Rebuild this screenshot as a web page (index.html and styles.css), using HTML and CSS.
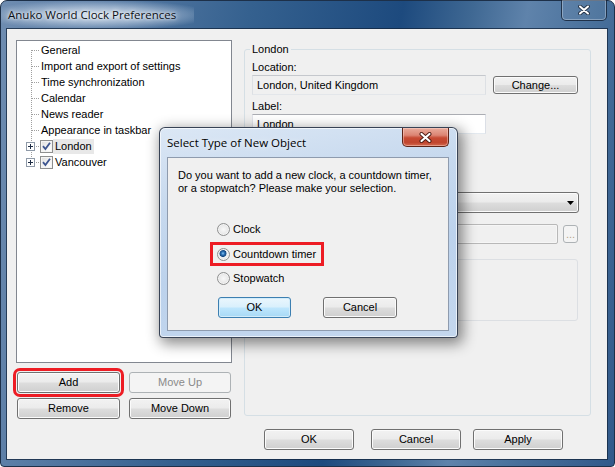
FILE: index.html
```html
<!DOCTYPE html>
<html>
<head>
<meta charset="utf-8">
<title>Anuko World Clock Preferences</title>
<link rel="stylesheet" href="styles.css">
</head>
<body>
<div class="window">
  <div class="titlebar">
    <div class="title">Anuko World Clock Preferences</div>
    <div class="caption-close">
      <svg width="12" height="10" viewBox="0 0 12 10"><path d="M2 1.5 L10 8.5 M10 1.5 L2 8.5" stroke="#27364a" stroke-width="3.8" stroke-linecap="round"/><path d="M2 1.5 L10 8.5 M10 1.5 L2 8.5" stroke="#ffffff" stroke-width="2" stroke-linecap="round"/></svg>
    </div>
  </div>
  <div class="client">
    <div class="main">
      <div class="left">
        <div class="tree">
          <div class="node first"><span class="gutter"></span><span class="label">General</span></div>
          <div class="node"><span class="gutter"></span><span class="label">Import and export of settings</span></div>
          <div class="node"><span class="gutter"></span><span class="label">Time synchronization</span></div>
          <div class="node"><span class="gutter"></span><span class="label">Calendar</span></div>
          <div class="node"><span class="gutter"></span><span class="label">News reader</span></div>
          <div class="node"><span class="gutter"></span><span class="label">Appearance in taskbar</span></div>
          <div class="node"><span class="gutter"><svg class="expander" width="9" height="9" viewBox="0 0 9 9"><rect x="0.5" y="0.5" width="8" height="8" fill="#ffffff" stroke="#8f9aa8"/><path d="M2 4.5h5M4.5 2v5" stroke="#1e2c44" stroke-width="1"/></svg></span><span class="check"><svg width="11" height="11" viewBox="0 0 11 11"><path d="M2 5.2 L4.4 8 L9 1.8" fill="none" stroke="#3d5590" stroke-width="1.8"/></svg></span><span class="label selected">London</span></div>
          <div class="node last"><span class="gutter"><svg class="expander" width="9" height="9" viewBox="0 0 9 9"><rect x="0.5" y="0.5" width="8" height="8" fill="#ffffff" stroke="#8f9aa8"/><path d="M2 4.5h5M4.5 2v5" stroke="#1e2c44" stroke-width="1"/></svg></span><span class="check"><svg width="11" height="11" viewBox="0 0 11 11"><path d="M2 5.2 L4.4 8 L9 1.8" fill="none" stroke="#3d5590" stroke-width="1.8"/></svg></span><span class="label">Vancouver</span></div>
        </div>
        <div class="btns">
          <button class="btn marked">Add</button>
          <button class="btn disabled">Move Up</button>
          <button class="btn">Remove</button>
          <button class="btn">Move Down</button>
        </div>
      </div>
      <fieldset class="group">
        <legend>London</legend>
        <div class="caption">Location:</div>
        <div class="row">
          <div class="field readonly w-main">London, United Kingdom</div>
          <button class="btn change">Change...</button>
        </div>
        <div class="caption gap">Label:</div>
        <div class="field w-main">London</div>
        <div class="combo"><svg width="7" height="4" viewBox="0 0 7 4"><path d="M0 0 H7 L3.5 4 Z" fill="#000"/></svg></div>
        <div class="row row-file">
          <div class="field disabled w-file"></div>
          <button class="btn disabled dots">...</button>
        </div>
        <div class="pane"></div>
      </fieldset>
    </div>
    <div class="footer">
      <button class="btn fbtn">OK</button>
      <button class="btn fbtn f-cancel">Cancel</button>
      <button class="btn fbtn f-apply">Apply</button>
    </div>

    <div class="dialog">
      <div class="dlg-titlebar">
        <div class="dlg-title">Select Type of New Object</div>
        <div class="dlg-close">
          <svg width="13" height="11" viewBox="0 0 13 11"><path d="M2.5 2 L10.5 9 M10.5 2 L2.5 9" stroke="#4b1a12" stroke-width="4" stroke-linecap="round"/><path d="M2.5 2 L10.5 9 M10.5 2 L2.5 9" stroke="#ffffff" stroke-width="2.2" stroke-linecap="round"/></svg>
        </div>
      </div>
      <div class="dlg-client">
        <p class="dlg-text">Do you want to add a new clock, a countdown timer,<br>or a stopwatch? Please make your selection.</p>
        <div class="options">
          <div class="opt"><span class="radio"></span><span>Clock</span></div>
          <div class="opt hl"><span class="radio checked"></span><span>Countdown timer</span></div>
          <div class="opt last"><span class="radio"></span><span>Stopwatch</span></div>
        </div>
        <div class="dlg-btns">
          <button class="btn default d-ok">OK</button>
          <button class="btn d-cancel">Cancel</button>
        </div>
      </div>
    </div>
  </div>
</div>
</body>
</html>
```

FILE: styles.css
```css
* { box-sizing: border-box; }
html, body { margin: 0; padding: 0; }
body {
  width: 615px;
  height: 467px;
  overflow: hidden;
  background: #ffffff;
  font-family: "Liberation Sans", Arial, sans-serif;
  font-size: 11px;
  color: #000;
}

/* ---------- main window frame ---------- */
.window {
  width: 615px;
  height: 467px;
  display: flex;
  flex-direction: column;
  padding: 0 7px 7px 6px;
  border: 1px solid #1d3049;
  border-radius: 7px 7px 4px 4px;
  background:
    linear-gradient(100deg, #6f8db1 0%, #5478a2 18%, #35618f 36%, #1d4a7e 58%, #3f6893 68%, #5f83ab 76%, #48709b 86%, #31598a 100%);
}
.titlebar {
  flex: none;
  height: 28px;
  display: flex;
  align-items: flex-start;
}
.title {
  margin-left: -6px;
  padding: 0 18px 0 7px;
  font-family: "Open Sans", "Noto Sans", sans-serif;
  font-size: 11.5px;
  line-height: 28px;
  color: #0b0f16;
  background: radial-gradient(ellipse 60% 55% at 50% 50%, rgba(235,242,250,0.85) 0%, rgba(200,215,232,0.55) 55%, rgba(160,182,210,0) 100%);
  text-shadow: 0 0 6px #ffffff, 0 0 3px rgba(255,255,255,0.8);
}
.caption-close {
  margin-left: auto;
  margin-top: -1px;
  width: 46px;
  height: 21px;
  border: 1px solid rgba(18,32,52,0.8);
  border-top: none;
  border-radius: 0 0 5px 5px;
  box-shadow: inset 0 0 0 1px rgba(255,255,255,0.3);
  background: rgba(255,255,255,0.06);
  display: flex;
  align-items: center;
  justify-content: center;
}

.client {
  flex: 1;
  position: relative;
  background: #f0f0f0;
  box-shadow: 0 0 0 1px rgba(18,36,60,0.75);
}

/* ---------- layout ---------- */
.main {
  height: 400px;
  display: flex;
}
.left {
  width: 225px;
  padding: 11px 0 0 9px;
}

/* ---------- tree ---------- */
.tree {
  width: 216px;
  height: 323px;
  border: 1px solid #828790;
  background: #ffffff;
  padding-top: 1px;
}
.node {
  height: 16px;
  display: flex;
  align-items: center;
}
.gutter {
  flex: none;
  width: 22px;
  align-self: stretch;
  display: flex;
  align-items: center;
  background:
    repeating-linear-gradient(to bottom, #a0a0a0 0 1px, transparent 1px 2px) 14px 0 / 1px 100% no-repeat,
    repeating-linear-gradient(to right, #a0a0a0 0 1px, transparent 1px 2px) 15px 8px / 7px 1px no-repeat;
}
.node.first .gutter {
  background:
    repeating-linear-gradient(to bottom, #a0a0a0 0 1px, transparent 1px 2px) 14px 8px / 1px 8px no-repeat,
    repeating-linear-gradient(to right, #a0a0a0 0 1px, transparent 1px 2px) 15px 8px / 7px 1px no-repeat;
}
.node.last .gutter {
  background:
    repeating-linear-gradient(to bottom, #a0a0a0 0 1px, transparent 1px 2px) 14px 0 / 1px 9px no-repeat,
    repeating-linear-gradient(to right, #a0a0a0 0 1px, transparent 1px 2px) 15px 8px / 7px 1px no-repeat;
}
.expander {
  display: block;
  margin-left: 9px;
}
.check {
  flex: none;
  width: 13px;
  height: 13px;
  margin-left: 1px;
  border: 1px solid #8e8f8f;
  background: linear-gradient(135deg, #dcdcdc 0%, #f6f6f6 60%, #ffffff 100%);
  box-shadow: inset 0 0 0 1px #f4f4f4;
  display: flex;
  align-items: center;
  justify-content: center;
}
.check svg { display: block; }
.label {
  padding: 0 2px;
  line-height: 15px;
  white-space: nowrap;
}
.label.selected {
  background: #e8e8e8;
}

/* ---------- buttons ---------- */
.btn {
  font: inherit;
  color: #000;
  height: 21px;
  padding: 0;
  margin: 0;
  border: 1px solid #707070;
  border-radius: 3px;
  background: linear-gradient(#f2f2f2 0%, #ebebeb 48%, #dddddd 52%, #cfcfcf 100%);
  box-shadow: inset 0 0 0 1px #fbfbfb;
  text-align: center;
  line-height: 19px;
}
.btn.disabled {
  border-color: #adb2b5;
  background: #f4f4f4;
  box-shadow: none;
  color: #8a8a8a;
}
.btn.default {
  border-color: #3c7fb1;
  background: linear-gradient(#eaf6fd 0%, #d9f0fc 48%, #bee6fd 52%, #a7d9f5 100%);
  box-shadow: inset 0 0 0 1px #d2ecfa;
}
.btns {
  display: grid;
  grid-template-columns: 103px 102px;
  column-gap: 9px;
  row-gap: 5px;
  margin: 9px 0 0 1px;
}
.btn.marked {
  outline: 3px solid #ed1c24;
  outline-offset: 1px;
}

/* ---------- right group ---------- */
.group {
  margin: 14px 0 0 12px;
  width: 347px;
  height: 373px;
  min-width: 0;
  border: 1px solid #d5dfe5;
  border-radius: 3px;
  padding: 5px 0 0 7px;
}
.group legend {
  margin-left: -2px;
  padding: 0 2px;
  line-height: 13px;
}
.caption {
  line-height: 13px;
  margin-bottom: 1px;
}
.caption.gap { margin-top: 5px; }
.row {
  display: flex;
  align-items: flex-start;
}
.field {
  height: 20px;
  border: 1px solid;
  border-color: #abadb3 #dbdfe6 #e3e9ef #e2e3ea;
  background: #ffffff;
  padding: 0 4px;
  line-height: 18px;
  white-space: nowrap;
}
.field.readonly { background: #f0f0f0; border-color: #c5c8cd #dde0e4 #e3e6ea #dde0e4; }
.field.disabled {
  background: #f0f0f0;
  border-color: #b8b8b8;
  border-radius: 2px;
  box-shadow: inset 0 0 0 1px #f6f6f6;
}
.w-main { width: 234px; }
.w-file { width: 306px; }
.btn.change {
  width: 85px;
  height: 18px;
  line-height: 16px;
  margin: 1px 0 0 7px;
}
.combo {
  margin-top: 58px;
  width: 327px;
  height: 21px;
  border: 1px solid #707070;
  border-radius: 3px;
  background: linear-gradient(#f2f2f2 0%, #ebebeb 48%, #dddddd 52%, #cfcfcf 100%);
  box-shadow: inset 0 0 0 1px #fbfbfb;
  display: flex;
  align-items: center;
  justify-content: flex-end;
  padding-right: 4px;
}
.combo svg { display: block; }
.row-file { margin-top: 11px; }
.btn.dots {
  width: 15px;
  height: 18px;
  line-height: 14px;
  margin: 1px 0 0 5px;
  color: #b4a48c;
  border-radius: 3px;
}
.pane {
  margin-top: 15px;
  width: 326px;
  height: 62px;
  border: 1px solid #dcdfe3;
  border-radius: 3px;
}

/* ---------- footer ---------- */
.footer {
  display: flex;
  padding-left: 257px;
}
.fbtn { width: 90px; }
.f-cancel { margin-left: 17px; }
.f-apply { margin-left: 12px; }

/* ---------- modal dialog ---------- */
.dialog {
  position: absolute;
  left: 152px;
  top: 98px;
  width: 299px;
  height: 211px;
  display: flex;
  flex-direction: column;
  padding: 0 8px 6px 7px;
  border: 1px solid rgba(30,40,58,0.85);
  border-radius: 6px 6px 4px 4px;
  background: linear-gradient(170deg, #dbe7f5 0%, #c7d9ee 30%, #bcd2ec 60%, #c4d7ee 100%);
  box-shadow: 3px 4px 14px 2px rgba(0,0,0,0.45), inset 0 0 0 1px rgba(255,255,255,0.65);
}
.dlg-titlebar {
  flex: none;
  height: 29px;
  display: flex;
  align-items: flex-start;
}
.dlg-title {
  font-family: "Open Sans", "Noto Sans", sans-serif;
  font-size: 11.5px;
  line-height: 30px;
  color: #000;
  text-shadow: 0 0 6px rgba(255,255,255,0.9);
}
.dlg-close {
  margin-left: auto;
  width: 47px;
  height: 19px;
  border: 1px solid #5e2418;
  border-top: none;
  border-radius: 0 0 5px 5px;
  background: linear-gradient(#e9ab9b 0%, #dc8574 40%, #c74a33 55%, #c0452e 80%, #d36a4f 100%);
  box-shadow: inset 0 0 0 1px rgba(255,220,210,0.45);
  display: flex;
  align-items: center;
  justify-content: center;
}
.dlg-close svg { display: block; }
.dlg-client {
  flex: 1;
  background: #f0f0f0;
  border: 1px solid #8e9bae;
  padding: 11px 0 0 10px;
}
.dlg-text {
  margin: 0;
  line-height: 13px;
}
.options {
  margin: 26px 0 0 36px;
  display: flex;
  flex-direction: column;
  align-items: flex-start;
}
.opt {
  height: 16px;
  display: flex;
  align-items: center;
  padding: 0 4px 0 3px;
  gap: 3px;
}
.opt.hl { margin-top: 9px; outline: 3px solid #ed1c24; outline-offset: 1px; }
.opt.last { margin-top: 8px; }
.radio {
  flex: none;
  width: 13px;
  height: 13px;
  border-radius: 50%;
  border: 1px solid #8e8f8f;
  background: radial-gradient(circle at 50% 50%, #f8f8f8 0%, #ececec 45%, #d2d2d2 100%);
  box-shadow: inset 0 0 0 1px #f4f4f4;
}
.radio.checked {
  background: radial-gradient(circle at 45% 40%, #8cc4f0 0px, #2b73b8 1.6px, #16467e 3.2px, #d9e4ee 3.8px, #f3f3f3 4.6px, #e6e6e6 60%, #d0d0d0 100%);
}
.dlg-btns {
  display: flex;
  margin: 11px 0 0 40px;
}
.d-ok { width: 73px; }
.d-cancel { width: 74px; margin-left: 32px; }
```
